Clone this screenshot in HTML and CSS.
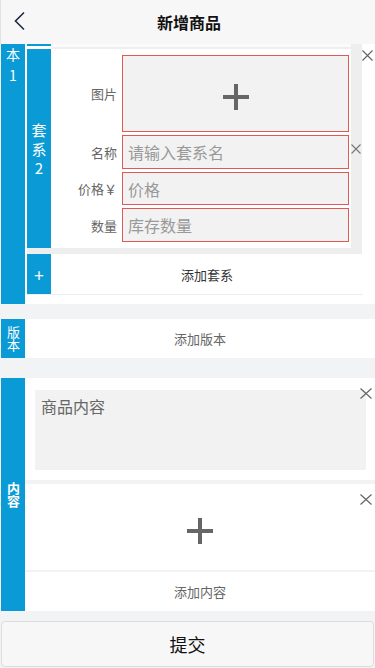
FILE: index.html
```html
<!DOCTYPE html>
<html lang="zh">
<head>
  <meta charset="UTF-8" />
  <meta name="viewport" content="width=device-width, initial-scale=1.0"/>
  <title>新增商品</title>
  <link rel="stylesheet" href="styles.css">
</head>
<body>

  <div class="header">
    <span class="back">
      <svg width="14" height="20" viewBox="0 0 14 20"><path d="M11 1.5 L2.5 10 L11 18.5" fill="none" stroke="#1d2a44" stroke-width="1.6"/></svg>
    </span>
    <div class="title">新增商品</div>
  </div>

  <div class="section sec-version">
    <div class="side side-top">本<br>1</div>
    <div class="main main-version">
      <div class="taoxi">
        <div class="tail"><i></i><b></b></div>
        <div class="taoxi-row">
          <div class="tab tab-taoxi">套<br>系<br>2</div>
          <div class="form">
            <div class="row">
              <div class="label">图片</div>
              <div class="field pic">
                <svg width="26" height="26" viewBox="0 0 26 26"><path d="M13 0 V26 M0 13 H26" stroke="#666" stroke-width="4"/></svg>
              </div>
            </div>
            <div class="row">
              <div class="label">名称</div>
              <input class="field" type="text" placeholder="请输入套系名">
            </div>
            <div class="row">
              <div class="label">价格￥</div>
              <input class="field short" type="text" placeholder="价格">
            </div>
            <div class="row">
              <div class="label">数量</div>
              <input class="field" type="text" placeholder="库存数量">
            </div>
          </div>
        </div>
        <span class="close close-card"><svg width="11" height="11" viewBox="0 0 11 11"><path d="M0.5 0.5 L10.5 10.5 M10.5 0.5 L0.5 10.5" stroke="#666" stroke-width="1.2"/></svg></span>
        <span class="close close-name"><svg width="10" height="10" viewBox="0 0 10 10"><path d="M0.5 0.5 L9.5 9.5 M9.5 0.5 L0.5 9.5" stroke="#777" stroke-width="1.1"/></svg></span>
      </div>
      <div class="add-row">
        <div class="tab tab-plus">+</div>
        <div class="add-text dark">添加套系</div>
      </div>
    </div>
  </div>

  <div class="section sec-add-version">
    <div class="side side-mid"><span class="vtext">版本</span></div>
    <div class="add-text">添加版本</div>
  </div>

  <div class="section sec-content">
    <div class="side side-mid bold"><span class="vtext">内容</span></div>
    <div class="main">
      <div class="item item-text">
        <textarea class="content-box">商品内容</textarea>
        <span class="close close-item"><svg width="12" height="11" viewBox="0 0 12 11"><path d="M0.5 0.5 L11.5 10.5 M11.5 0.5 L0.5 10.5" stroke="#666" stroke-width="1.2"/></svg></span>
      </div>
      <div class="item item-pic">
        <svg width="26" height="26" viewBox="0 0 26 26"><path d="M13 0 V26 M0 13 H26" stroke="#666" stroke-width="4"/></svg>
        <span class="close close-item"><svg width="12" height="11" viewBox="0 0 12 11"><path d="M0.5 0.5 L11.5 10.5 M11.5 0.5 L0.5 10.5" stroke="#666" stroke-width="1.2"/></svg></span>
      </div>
      <div class="add-text add-content">添加内容</div>
    </div>
  </div>

  <button class="submit">提交</button>

</body>
</html>
```

FILE: styles.css
```css
body {
  margin: 0;
  background: #f2f3f5;
  font-family: "Noto Sans CJK SC", "Noto Sans", sans-serif;
  color: #333;
}

.header {
  height: 44px;
  background: #f7f7f7;
  border-left: 1px solid #e3e3e3;
  display: flex;
  align-items: center;
  justify-content: center;
  position: relative;
}

.back {
  position: absolute;
  left: 12px;
  top: 11px;
}

.title {
  font-size: 16px;
  font-weight: bold;
  color: #111;
  margin-left: 2px;
}

.section {
  display: flex;
  margin-left: 1px;
  background: #fff;
}

.side {
  width: 24px;
  flex: none;
  background: #0a9bd6;
  color: #fff;
  text-align: center;
  font-size: 14px;
}

.side-top {
  line-height: 21px;
}

.side-mid {
  display: flex;
  align-items: center;
  justify-content: center;
  font-size: 13px;
}

.vtext {
  writing-mode: vertical-rl;
  text-orientation: upright;
  line-height: 16px;
}

.bold {
  font-weight: bold;
}

.main {
  flex: 1;
  min-width: 0;
}

.main-version {
  padding: 0 0 9px 2px;
}

/* 套系 card */
.taoxi {
  position: relative;
  background: #eee;
  margin-right: 13px;
  padding: 0 11px 6px 0;
}

.tail {
  display: flex;
  height: 5px;
}

.tail i {
  width: 24px;
  background: linear-gradient(#0a9bd6 0 2px, #fff 2px);
}

.tail b {
  flex: 1;
  background: linear-gradient(#fbfbfb 0 3px, #eee 3px);
}

.taoxi-row {
  display: flex;
}

.tab {
  width: 24px;
  flex: none;
  background: #0a9bd6;
  color: #fff;
  display: flex;
  align-items: center;
  justify-content: center;
  text-align: center;
}

.tab-taoxi {
  font-size: 15px;
  line-height: 19px;
}

.tab-plus {
  font-size: 17px;
}

.form {
  flex: 1;
  background: #fff;
  padding: 6px 2px 6px 0;
  display: flex;
  flex-direction: column;
  gap: 3px;
}

.row {
  display: flex;
  align-items: center;
}

.label {
  width: 66px;
  margin-right: 5px;
  text-align: right;
  font-size: 13px;
  color: #666;
}

.field {
  width: 227px;
  height: 34px;
  box-sizing: border-box;
  border: 1px solid #e05a55;
  background: #f2f2f2;
  font-family: inherit;
  font-size: 16px;
  padding: 0 5px;
  margin: 0;
  outline: none;
}

.field.short {
  height: 33px;
}

.field::placeholder {
  color: #999;
}

.pic {
  height: 77px;
  display: flex;
  align-items: center;
  justify-content: center;
  padding-top: 6px;
}

.close {
  position: absolute;
  line-height: 0;
}

.close-card {
  right: -11px;
  top: 6px;
}

.close-name {
  right: 1px;
  top: 100px;
}

.add-row {
  display: flex;
  height: 40px;
  margin-right: 12px;
  border-bottom: 1px solid #eee;
}

.add-text {
  flex: 1;
  display: flex;
  align-items: center;
  justify-content: center;
  font-size: 13px;
  color: #666;
}

.add-text.dark {
  color: #333;
}

.sec-add-version {
  margin-top: 15px;
  height: 39px;
}

.sec-content {
  margin-top: 20px;
  background: #f2f3f5;
}

.item {
  position: relative;
  background: #fff;
}

.item-text {
  padding: 12px 9px 10px 10px;
}

.content-box {
  display: block;
  width: 100%;
  height: 80px;
  box-sizing: border-box;
  border: none;
  background: #f2f2f2;
  font-family: inherit;
  font-size: 16px;
  color: #666;
  padding: 4px 6px;
  resize: none;
  outline: none;
}

.close-item {
  right: 3px;
  top: 10px;
}

.item-pic {
  margin-top: 4px;
  height: 86px;
  box-sizing: border-box;
  padding-top: 34px;
  text-align: center;
}

.add-content {
  margin-top: 2px;
  height: 39px;
  background: #fff;
}

.submit {
  display: block;
  width: 373px;
  height: 46px;
  margin: 10px 1px 0;
  border: 1px solid #ddd;
  border-radius: 4px;
  background: #f7f7f7;
  font-family: inherit;
  font-size: 18px;
  color: #111;
}
```
